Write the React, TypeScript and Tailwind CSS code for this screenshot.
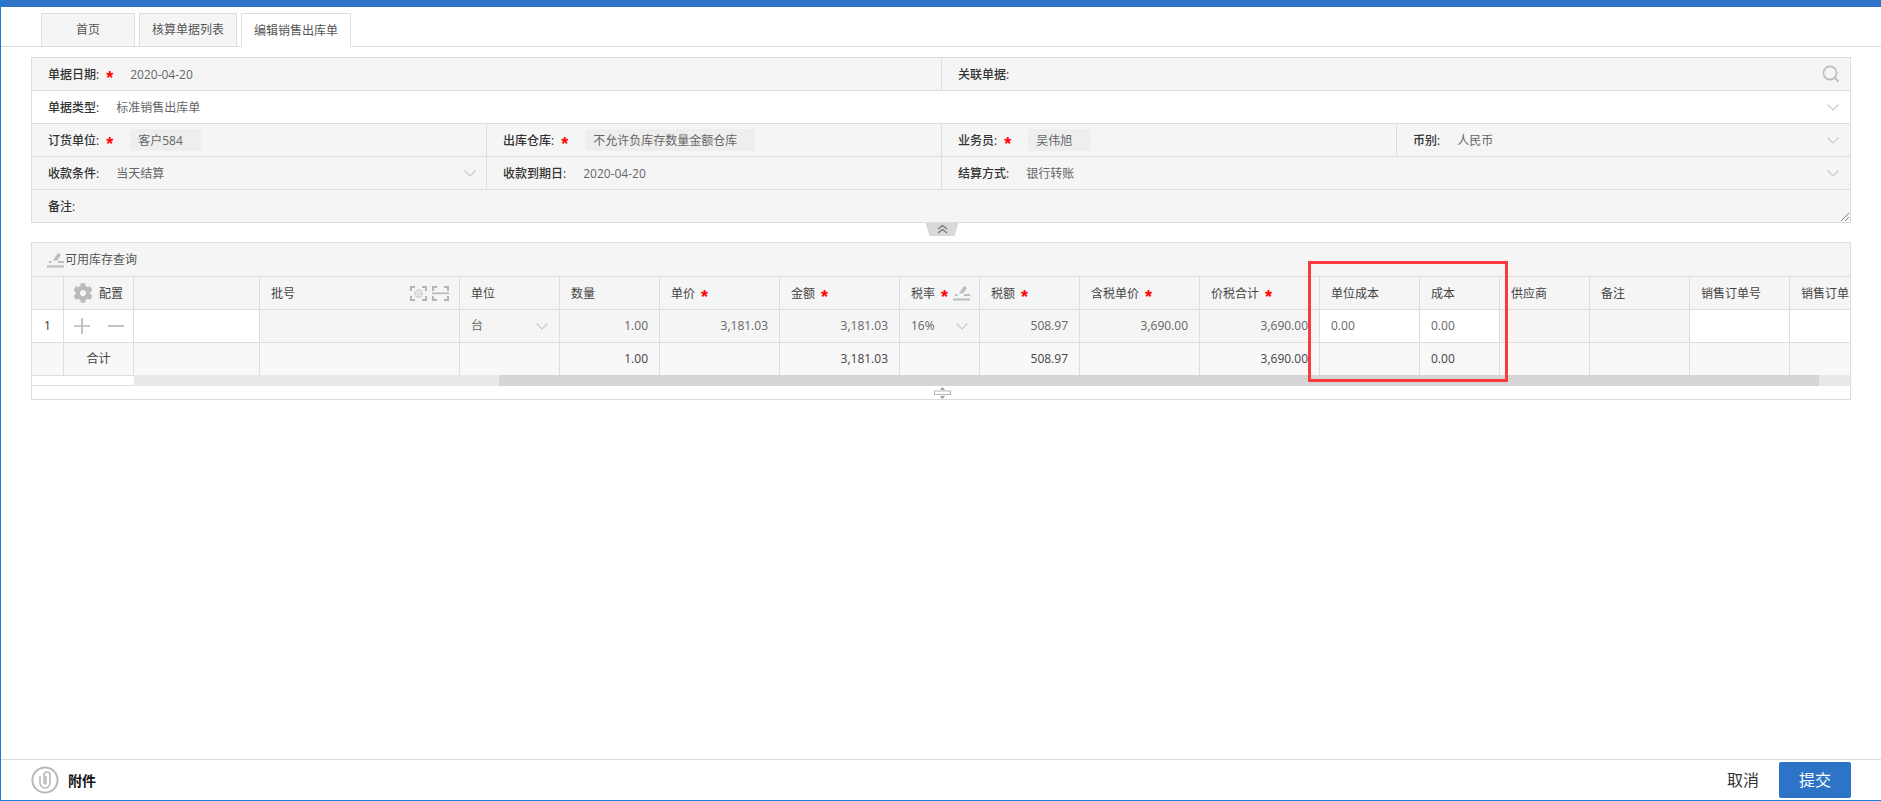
import React from 'react';
import { FaCog } from 'react-icons/fa';

const FONT = 'font-["Open_Sans","Noto_Sans_CJK_SC",sans-serif]';
const TABLE_COLS =
  'grid-cols-[32px_70px_126px_200px_100px_100px_120px_120px_80px_100px_120px_120px_100px_80px_90px_100px_100px_100px]';

function Star() {
  return <span className='font-["Liberation_Sans"] text-[18px] font-bold leading-none text-[#f00]'>*</span>;
}

function Chevron({ className = '' }: { className?: string }) {
  return (
    <svg width="12" height="7" viewBox="0 0 12 7" fill="none" className={className}>
      <path d="M0.5 0.5 L6 6 L11.5 0.5" stroke="#c9c9c9" strokeWidth="1.1" />
    </svg>
  );
}

function EditIcon() {
  return (
    <svg width="17" height="16" viewBox="0 0 17 16" className="shrink-0">
      <path d="M6 8.5 L11 1 L14 3 L10 8.5 Z" fill="#bdbdbd" />
      <rect x="2" y="9" width="2.5" height="2" fill="#bdbdbd" />
      <rect x="11" y="9" width="6" height="2" fill="#bdbdbd" />
      <rect x="0" y="13.5" width="17" height="2" fill="#bdbdbd" />
    </svg>
  );
}

function FrameCorners() {
  return (
    <path
      d="M1 5 V1 H5 M12 1 H16 V5 M16 10 V14 H12 M5 14 H1 V10"
      fill="none"
      stroke="#b5b5b5"
      strokeWidth="2"
    />
  );
}

function ScanGearIcon() {
  return (
    <svg width="17" height="15" viewBox="0 0 17 15">
      <FrameCorners />
      <circle cx="8.5" cy="7.5" r="3.6" fill="none" stroke="#bdbdbd" strokeWidth="1.4" strokeDasharray="1.6 0.7" />
      <circle cx="8.5" cy="7.5" r="1.5" fill="none" stroke="#bdbdbd" strokeWidth="0.8" />
    </svg>
  );
}

function ScanLineIcon() {
  return (
    <svg width="17" height="15" viewBox="0 0 17 15">
      <FrameCorners />
      <rect x="0" y="6.5" width="17" height="1.6" fill="#b5b5b5" />
    </svg>
  );
}

function FormCell({
  label,
  required,
  value,
  chip,
  gap = 'ml-[17px]',
  chevron,
  search,
  width = 'w-[455px]',
  last,
}: {
  label: string;
  required?: boolean;
  value?: string;
  chip?: string;
  gap?: string;
  chevron?: boolean;
  search?: boolean;
  width?: string;
  last?: boolean;
}) {
  return (
    <div
      className={`flex h-full items-center pl-[16px] ${last ? 'flex-1 pr-[11px]' : `${width} border-r border-[#ddd] pr-[10px]`}`}
    >
      <span className="pt-[1px] font-medium text-[#333]">{label}:</span>
      {required && <span className="ml-[7px] flex h-[10px] items-start"><Star /></span>}
      {value && <span className={`${gap} pt-[1px] text-[#666]`}>{value}</span>}
      {chip && (
        <span className={`${gap} h-[22px] rounded-[2px] bg-[#eee] pl-[8px] pr-[18px] leading-[23px] text-[#666]`}>{chip}</span>
      )}
      {chevron && <Chevron className="ml-auto" />}
      {search && (
        <svg width="18" height="18" viewBox="0 0 18 18" fill="none" className="ml-auto -mr-[1px]">
          <circle cx="8" cy="8" r="6.6" stroke="#bdbdbd" strokeWidth="1.7" />
          <path d="M12.8 12.8 L16.5 16.5" stroke="#bdbdbd" strokeWidth="1.9" />
        </svg>
      )}
    </div>
  );
}

function Th({ label, required, children }: { label?: string; required?: boolean; children?: React.ReactNode }) {
  return (
    <div className="flex items-center overflow-hidden whitespace-nowrap border-r border-[#ddd] pl-[11px] pr-[10px] text-[#444]">
      {label && <span className="pt-[1px]">{label}</span>}
      {required && <span className="ml-[6px] flex h-[10px] items-start"><Star /></span>}
      {children}
    </div>
  );
}

function Td({
  text,
  white,
  left,
  total,
  children,
}: {
  text?: string;
  white?: boolean;
  left?: boolean;
  total?: boolean;
  children?: React.ReactNode;
}) {
  return (
    <div
      className={`flex items-center border-r border-[#ddd] px-[11px] ${left ? 'justify-start' : 'justify-end'} ${
        white ? 'bg-white' : ''
      } ${total ? 'text-[#444]' : 'text-[#666]'}`}
    >
      {text}
      {children}
    </div>
  );
}

const headers: [string, boolean][] = [
  ['单价', true],
  ['金额', true],
];

const headersAfterRate: [string, boolean][] = [
  ['税额', true],
  ['含税单价', true],
  ['价税合计', true],
  ['单位成本', false],
  ['成本', false],
  ['供应商', false],
  ['备注', false],
  ['销售订单号', false],
  ['销售订单', false],
];

export default function App() {
  return (
    <div className={`flex h-[801px] flex-col overflow-hidden border-b border-l border-[#1a7fd8] bg-white text-[12px] ${FONT}`}>
      <div className="-ml-[1px] h-[7px] shrink-0 bg-[#2d74c8]" />

      <div className="mt-[6px] flex h-[34px] shrink-0 items-end gap-[4px] border-b border-[#ddd] pl-[40px] text-[#555]">
        <div className="flex h-[33px] w-[94px] items-center justify-center border-x border-t border-[#ddd] bg-[#f5f5f5]">首页</div>
        <div className="flex h-[33px] w-[98px] items-center justify-center border-x border-t border-[#ddd] bg-[#f5f5f5]">核算单据列表</div>
        <div className="-mb-[1px] flex h-[34px] w-[110px] items-center justify-center border-x border-t border-[#ddd] bg-white">编辑销售出库单</div>
      </div>

      <div className="mx-[30px] mt-[10px] flex h-[166px] shrink-0 flex-col border border-[#ddd] bg-[#f5f5f5]">
        <div className="flex h-[33px] border-b border-[#ddd]">
          <FormCell label="单据日期" required value="2020-04-20" width="w-[910px]" />
          <FormCell label="关联单据" search last />
        </div>
        <div className="flex h-[33px] border-b border-[#ddd] bg-white">
          <FormCell label="单据类型" value="标准销售出库单" last chevron />
        </div>
        <div className="flex h-[33px] border-b border-[#ddd]">
          <FormCell label="订货单位" required chip="客户584" />
          <FormCell label="出库仓库" required chip="不允许负库存数量金额仓库" />
          <FormCell label="业务员" required chip="吴伟旭" />
          <FormCell label="币别" value="人民币" last chevron />
        </div>
        <div className="flex h-[33px] border-b border-[#ddd]">
          <FormCell label="收款条件" value="当天结算" chevron />
          <FormCell label="收款到期日" value="2020-04-20" />
          <FormCell label="结算方式" value="银行转账" last chevron />
        </div>
        <div className="relative flex h-[32px]">
          <FormCell label="备注" last />
          <svg width="8" height="8" viewBox="0 0 8 8" className="absolute bottom-[1px] right-[1px]">
            <path d="M0 8 L8 0 M4 8 L8 4" stroke="#666" strokeWidth="0.8" />
          </svg>
        </div>
      </div>

      <div className="flex h-[19px] shrink-0 justify-center pl-[2px]">
        <div className="flex h-[13px] w-[33px] items-start justify-center bg-[#d9d9d9] [clip-path:polygon(0_0,100%_0,88%_100%,12%_100%)]">
          <svg width="11" height="10" viewBox="0 0 11 10" fill="none" className="mt-[1px]">
            <path d="M1 5 L5.5 1.5 L10 5 M1 9 L5.5 5.5 L10 9" stroke="#777" strokeWidth="1.3" />
          </svg>
        </div>
      </div>

      <div className="relative mx-[30px] flex h-[158px] shrink-0 flex-col border border-[#ddd]">
        <div className="flex h-[34px] shrink-0 items-center gap-[1px] border-b border-[#ddd] bg-[#f5f5f5] pl-[15px] text-[#555]">
          <EditIcon />
          <span className="pt-[1px]">可用库存查询</span>
        </div>

        <div className="flex flex-col overflow-hidden">
          <div className={`grid h-[33px] border-b border-[#ddd] bg-[#f5f5f5] ${TABLE_COLS}`}>
            <Th />
            <div className="flex items-center border-r border-[#ddd] pl-[9px] text-[#444]">
              <FaCog size={20} color="#bbbbbb" />
              <span className="ml-[6px] pt-[1px]">配置</span>
            </div>
            <Th />
            <Th label="批号">
              <span className="ml-auto flex items-center gap-[5px]">
                <ScanGearIcon />
                <ScanLineIcon />
              </span>
            </Th>
            <Th label="单位" />
            <Th label="数量" />
            {headers.map(([label, required]) => (
              <Th key={label} label={label} required={required} />
            ))}
            <Th label="税率" required>
              <span className="ml-auto -mr-[1px] flex">
                <EditIcon />
              </span>
            </Th>
            {headersAfterRate.map(([label, required]) => (
              <Th key={label} label={label} required={required} />
            ))}
          </div>

          <div className={`grid h-[33px] border-b border-[#ddd] bg-[#f5f5f5] ${TABLE_COLS}`}>
            <div className="flex items-center justify-center border-r border-[#ddd] bg-white text-[#333]">1</div>
            <div className="flex items-center gap-[18px] border-r border-[#ddd] bg-white pl-[10px]">
              <svg width="16" height="16" viewBox="0 0 16 16">
                <path d="M8 0 V16 M0 8 H16" stroke="#b8b8b8" strokeWidth="1.7" />
              </svg>
              <svg width="16" height="16" viewBox="0 0 16 16">
                <path d="M0 8 H16" stroke="#b8b8b8" strokeWidth="1.7" />
              </svg>
            </div>
            <Td white />
            <Td />
            <Td left>
              台
              <Chevron className="ml-auto" />
            </Td>
            <Td text="1.00" />
            <Td text="3,181.03" />
            <Td text="3,181.03" />
            <Td left>
              16%
              <Chevron className="ml-auto" />
            </Td>
            <Td text="508.97" />
            <Td text="3,690.00" />
            <Td text="3,690.00" />
            <Td left white text="0.00" />
            <Td left white text="0.00" />
            <Td />
            <Td />
            <Td white />
            <Td white />
          </div>

          <div className={`grid h-[32px] bg-[#f8f8f8] ${TABLE_COLS}`}>
            <Td />
            <div className="flex items-center justify-center border-r border-[#ddd] text-[#444]">合计</div>
            <Td />
            <Td />
            <Td />
            <Td total text="1.00" />
            <Td />
            <Td total text="3,181.03" />
            <Td />
            <Td total text="508.97" />
            <Td />
            <Td total text="3,690.00" />
            <Td />
            <Td left total text="0.00" />
            <Td />
            <Td />
            <Td />
            <Td />
          </div>
        </div>

        <div className="flex h-[11px] shrink-0">
          <div className="w-[102px] border-b border-t border-b-[#ddd] border-t-[#ddd] bg-white" />
          <div className="flex-1 bg-[#e9e9e9]">
            <div className="ml-[365px] h-full w-[1320px] bg-[#d6d6d6]" />
          </div>
        </div>

        <div className="flex flex-1 items-center justify-center pl-[2px]">
          <svg width="17" height="12" viewBox="0 0 17 12" fill="none">
            <rect x="0.5" y="4" width="16" height="3.5" stroke="#b5b5b5" />
            <path d="M8.5 0 L11 3 H6 Z M8.5 12 L11 9 H6 Z" fill="#9c9c9c" />
          </svg>
        </div>

        <div className="absolute left-[1276px] top-[18px] h-[121px] w-[200px] border-[3px] border-[#fb3a3f]" />
      </div>

      <div className="mt-auto flex h-[41px] shrink-0 items-center border-t border-[#ddd] px-[30px]">
        <svg width="28" height="28" viewBox="0 0 28 28" fill="none">
          <circle cx="14" cy="14" r="12.6" stroke="#b8b8b8" strokeWidth="2" />
          <path
            d="M9 10 V17 A5 5 0 0 0 19 17 V9 A3 3 0 0 0 13 9 V17 A1 1 0 0 0 15 17 V10"
            stroke="#b8b8b8"
            strokeWidth="1.6"
          />
        </svg>
        <span className="ml-[9px] text-[14px] font-bold text-[#111]">附件</span>
        <span className="ml-auto text-[16px] leading-none text-[#333]">取消</span>
        <div className="ml-[20px] flex h-[36px] w-[72px] items-center justify-center rounded-[2px] bg-[#2d74c8] text-[16px] text-white">
          提交
        </div>
      </div>
    </div>
  );
}
